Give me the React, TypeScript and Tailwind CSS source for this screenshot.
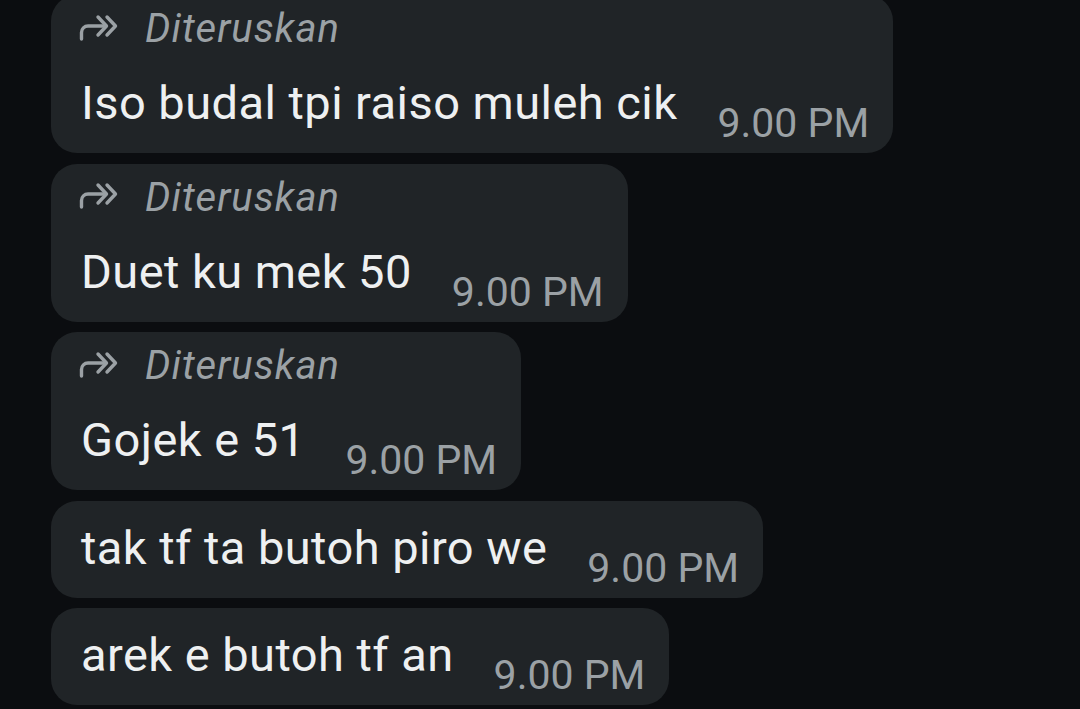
import React from "react";

const ForwardIcon = () => (
  <svg width="41" height="28" viewBox="0 0 41 28" fill="none" stroke="#9ba1a5" strokeWidth="3.4" strokeLinecap="round" strokeLinejoin="round">
    <path d="M3.5 25 V18.5 a6.5 6.5 0 0 1 6.5 -6.5 H27.5" />
    <path d="M20 3 L28.5 12 L20 21" />
    <path d="M29 3 L37.5 12 L29 21" />
  </svg>
);

type Msg = { fwd: boolean; text: string };

const msgs: Msg[] = [
  { fwd: true, text: "Iso budal tpi raiso muleh cik" },
  { fwd: true, text: "Duet ku mek 50" },
  { fwd: true, text: "Gojek e 51" },
  { fwd: false, text: "tak tf ta butoh piro we" },
  { fwd: false, text: "arek e butoh tf an" },
];

const Bubble = ({ m }: { m: Msg }) => (
  <div className="self-start rounded-[26px] bg-[#202427] pl-[30px] pr-[24px]">
    {m.fwd ? (
      <div className="flex items-center pt-[14px] h-[54px] mb-[26px] -ml-[3px]">
        <div className="mb-[3px] flex">
          <ForwardIcon />
        </div>
        <span className="ml-[26px] text-[40px] italic tracking-[1px] text-[#9ba1a5] leading-[40px]">Diteruskan</span>
      </div>
    ) : (
      <div className="h-[19px]" />
    )}
    <div className="flex items-end gap-[40px] pb-[6px]">
      <span className="text-[47px] leading-[56px] tracking-[0.45px] text-[#eef0f1] mb-[16px]">{m.text}</span>
      <span className="text-[41px] leading-[48px] text-[#9ba1a5]">9.00 PM</span>
    </div>
  </div>
);

export default function App() {
  return (
    <div
      className="w-[1080px] h-[709px] overflow-hidden bg-[#0b0d10]"
      style={{ fontFamily: "Roboto, 'Noto Sans', sans-serif" }}
    >
      <div className="flex flex-col gap-[10.5px] pl-[51px] -mt-[5px]">
        {msgs.map((m, i) => (
          <Bubble key={i} m={m} />
        ))}
      </div>
    </div>
  );
}
